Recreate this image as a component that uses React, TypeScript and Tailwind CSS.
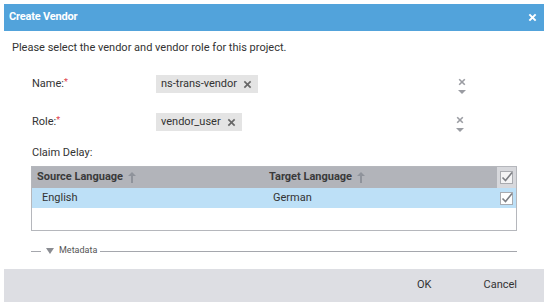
import React from "react";

const Check = ({ bg = "white" }: { bg?: string }) => (
  <svg width="13" height="13" viewBox="0 0 13 13">
    <rect x="0.5" y="0.5" width="12" height="12" fill={bg} stroke="#a9abb0" />
    <path d="M2.5 6.5 L5.5 9.5 L12 1.5" fill="none" stroke="#7d7f84" strokeWidth="1.6" />
  </svg>
);

const SmallX = ({ color = "#666", size = 9, w = 2 }: { color?: string; size?: number; w?: number }) => (
  <svg width={size} height={size} viewBox="0 0 10 10">
    <path d="M1.5 1.5 L8.5 8.5 M8.5 1.5 L1.5 8.5" stroke={color} strokeWidth={w} />
  </svg>
);

const ClearCaret = () => (
  <div className="flex flex-col items-center w-[9px]">
    <SmallX color="#9a9ca2" size={8} />
    <svg width="8" height="4" viewBox="0 0 8 4" className="mt-[4px]">
      <path d="M0 0 L8 0 L4 4 Z" fill="#9a9ca2" />
    </svg>
  </div>
);

const Arrow = () => (
  <svg width="8" height="11" viewBox="0 0 8 11" className="ml-[5px]">
    <path d="M4 0 L8 4 L5 4 L5 11 L3 11 L3 4 L0 4 Z" fill="#8f939b" />
  </svg>
);

export default function App() {
  const font = { fontFamily: "Roboto, 'Liberation Sans', Arial, sans-serif" };
  return (
    <div className="w-[549px] h-[302px] bg-white pl-[4px] pt-[4px]" style={font}>
      <div className="w-[540px] h-[298px] flex flex-col">
        <div className="h-[27px] bg-[#52a3db] flex items-center justify-between pl-[5px] pr-[7px]">
          <span className="text-white font-bold text-[11px] tracking-[-0.2px]">Create Vendor</span>
          <SmallX color="white" size={9} w={2.2} />
        </div>
        <div className="flex-1 flex flex-col text-[11px] text-[#333]">
          <div className="h-[32px] pl-[8px] pt-[10px] leading-[13px]">Please select the vendor and vendor role for this project.</div>
          <div className="h-[38px] flex items-center pl-[28px] mt-[2px]">
            <div className="w-[124px]">
              Name:<span className="text-[#e0404a] text-[9px] align-top">*</span>
            </div>
            <div className="h-[18px] bg-[#e4e4e4] flex items-center pl-[5px] pr-[6px] gap-[6px]">
              <span>ns-trans-vendor</span>
              <SmallX color="#666" size={9} w={1.8} />
            </div>
            <div className="ml-[199px] mt-[4px]"><ClearCaret /></div>
          </div>
          <div className="h-[38px] flex items-center pl-[28px]">
            <div className="w-[124px]">
              Role:<span className="text-[#e0404a] text-[9px] align-top">*</span>
            </div>
            <div className="h-[18px] bg-[#e4e4e4] flex items-center pl-[5px] pr-[6px] gap-[6px]">
              <span>vendor_user</span>
              <SmallX color="#666" size={9} w={1.8} />
            </div>
            <div className="ml-[214px] mt-[4px]"><ClearCaret /></div>
          </div>
          <div className="h-[18px] flex items-center pl-[28px] mt-[3px]">Claim Delay:</div>
          <div className="ml-[27px] mt-[4px] w-[486px] h-[65px] border border-[#b5b7bc] flex flex-col">
            <div className="h-[21px] bg-[#b2b4ba] flex items-center font-bold text-[#3a3a3a]">
              <div className="w-[232px] pl-[5px] flex items-center">Source Language<Arrow /></div>
              <div className="w-[233px] pl-[5px] flex items-center">Target Language<Arrow /></div>
              <div className="w-[19px] h-full bg-[#d7d8dc] flex items-center justify-center"><Check bg="#f4f4f5" /></div>
            </div>
            <div className="h-[20px] bg-[#bde0f7] flex items-center">
              <div className="w-[232px] pl-[10px]">English</div>
              <div className="w-[233px] pl-[9px]">German</div>
              <div className="w-[19px] flex items-center justify-center"><Check /></div>
            </div>
          </div>
          <div className="h-[14px] mt-[13px] flex items-center pl-[27px] pr-[27px] text-[9px] text-[#555]">
            <div className="w-[10px] h-px bg-[#a5a7ad]" />
            <svg width="8" height="6" viewBox="0 0 8 6" className="ml-[5px]">
              <path d="M0 0 L8 0 L4 6 Z" fill="#8a8c92" />
            </svg>
            <span className="ml-[5px]">Metadata</span>
            <div className="flex-1 h-px bg-[#a5a7ad] ml-[3px]" />
          </div>
        </div>
        <div className="h-[33px] bg-[#dddee3] flex items-center justify-end text-[11px] text-[#333] pr-[27px]">
          <span className="mr-[52px]">OK</span>
          <span>Cancel</span>
        </div>
      </div>
    </div>
  );
}
